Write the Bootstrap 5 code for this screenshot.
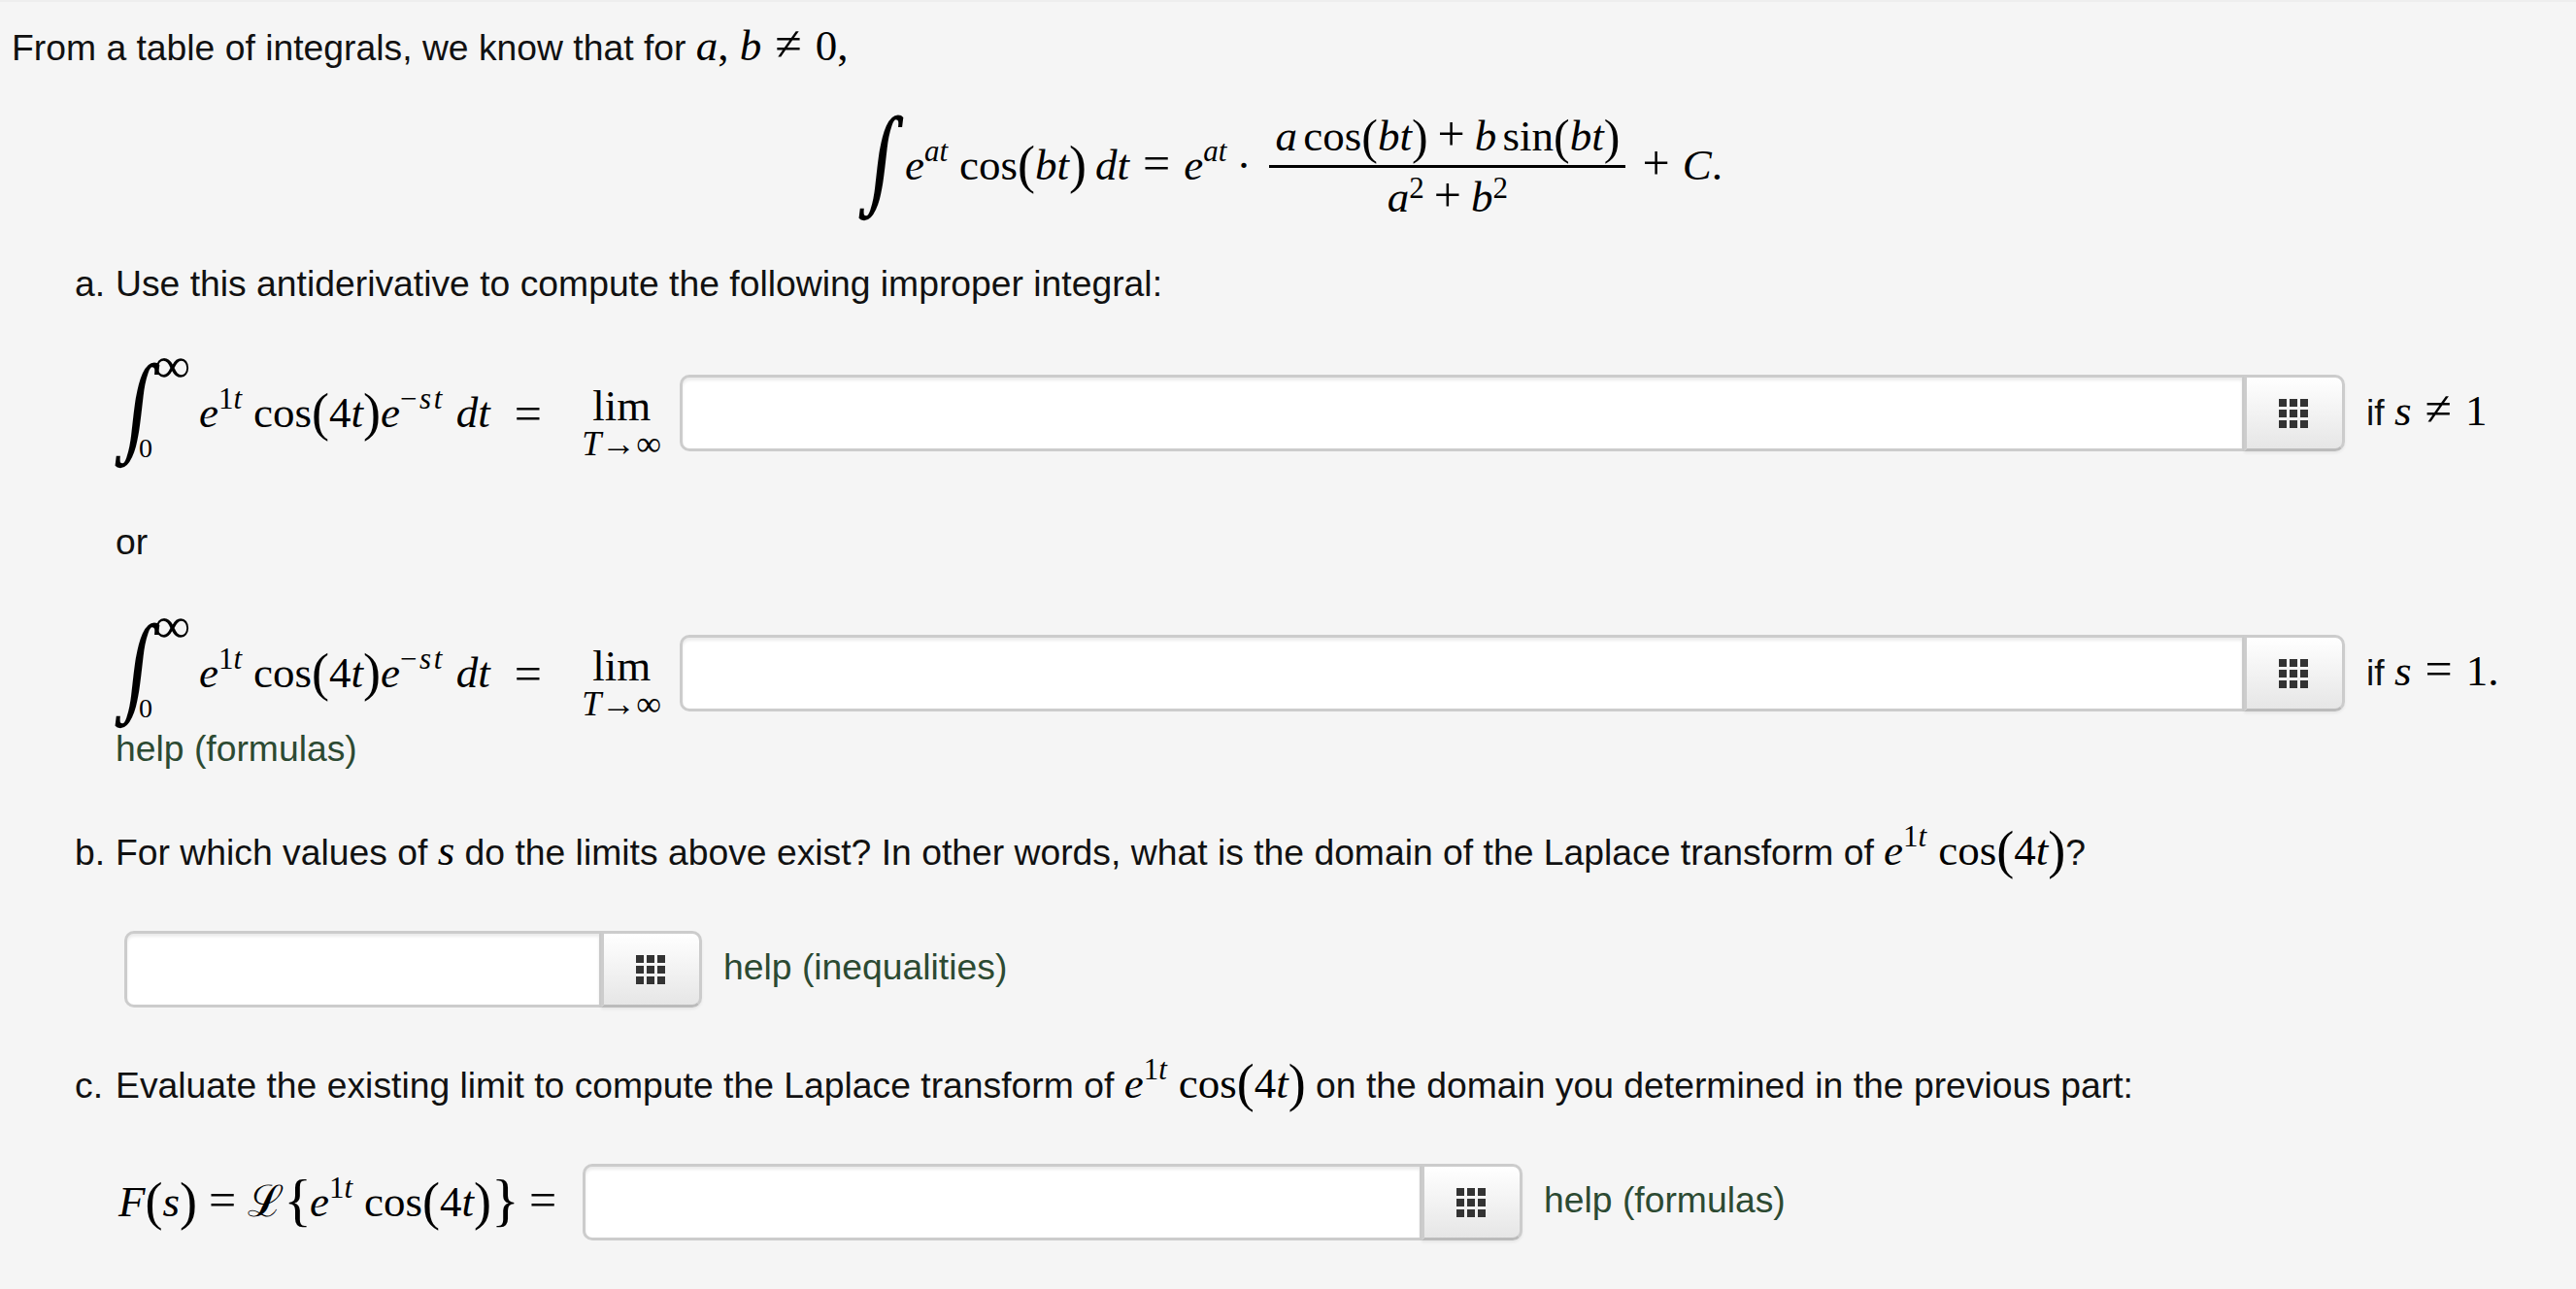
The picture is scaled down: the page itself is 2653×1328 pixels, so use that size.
<!DOCTYPE html>
<html lang="en"><head><meta charset="utf-8"><title>Laplace transform</title>
<link href="https://cdn.jsdelivr.net/npm/bootstrap@5.3.0/dist/css/bootstrap.min.css" rel="stylesheet">
<style>
html,body{height:100%}
body{background:#f5f5f5;border-top:2px solid #eee;font-family:"Liberation Sans",Arial,sans-serif;font-size:37.3px;color:#111;overflow:hidden}
.txt-line{height:44px;line-height:44px;white-space:nowrap}
.first-line{margin:23px 0 0 12px}
.part-line{margin-left:77px}
.part-mark{display:inline-block;width:42px}
.indent{margin-left:119px}
.mth{font-family:"Liberation Serif",serif;font-size:45px;white-space:nowrap;color:#000}
.mth i{font-style:italic}
.mth sup{font-size:31px;line-height:0;top:-.62em;vertical-align:baseline;position:relative;margin-right:3px}
.mth sup.sq{top:-.42em;margin-right:0}
.mth sup.wide-sup{letter-spacing:2.5px}
.op{margin:0 14px;font-size:50px;line-height:0}
.op-sm{margin:0 7px}
.op-f{margin:0 10px;font-size:50px;line-height:0}
.fn{margin-left:9px}
.disp{height:120px;margin-top:42px;padding-left:885px}
.frac{margin:0 17px 0 12px;width:367px}
.frac-top{border-bottom:3px solid #000;padding-bottom:4px;text-align:center;line-height:52px;word-spacing:-5px}
.frac-top .paren{font-size:50px}
.frac-bot{text-align:center;line-height:52px;padding-top:4px}
.plus-c{font-size:50px;line-height:0;margin-right:13px}
.int-sign{font-family:"DejaVu Math TeX Gyre","Liberation Serif",serif;font-size:76px;line-height:1;display:inline-block;transform:skewX(-7deg) scaleY(1.3);flex:none}
.int-d{width:47px}
.int-r{width:24px}
.limits{height:102px;line-height:30px;width:62px;flex:none;font-size:28px}
.lim-up{font-size:52px;margin:-13px 0 0 16px}
.eq-block{width:581px;height:79px}
.lim-col{margin-left:auto;margin-right:19px;text-align:center;padding-top:20px}
.lim-top{line-height:42px}
.lim-sub{font-size:36px;line-height:36px}
.eqs{margin-left:25px;font-size:50px;line-height:1}
.inp-wrap .form-control{height:79px;border:3px solid #ccc;border-radius:10px 0 0 10px;background:#fff;box-shadow:inset 0 3px 3px rgba(0,0,0,.08)}
.inp-wrap .btn{width:104px;height:79px;border:3px solid #ccc;border-bottom-color:#bbb;border-radius:0 10px 10px 0;background:linear-gradient(#fff,#e6e6e6);padding:0 2px 0 0;display:flex;align-items:center;justify-content:center;box-shadow:0 2px 3px rgba(0,0,0,.06)}
.inp-wrap svg{filter:blur(.4px)}
.w-long{width:1715px;flex:none}
.w-short{width:595px;flex:none}
.w-mid{width:968px;flex:none}
.after{margin-left:22px;margin-bottom:3px;white-space:nowrap}
.helper{color:#2c4a32}
.gap-a{margin-top:39px}.gap-r1{margin-top:72px}.gap-or{margin-top:71px}.gap-r2{margin-top:74px}.gap-h{margin-top:16px}.gap-b{margin-top:61px}.gap-r3{margin-top:61px}.gap-c{margin-top:56px}.gap-r4{margin-top:61px}
.short-row{margin-left:128px}
.f-block{width:481px;padding-left:3px}
.f-block .op{margin:0 12px}
.brace{font-size:60px;line-height:0;position:relative;top:3px;letter-spacing:-2px}
.paren{font-size:54px;line-height:0;position:relative;top:3px}
</style></head>
<body>
<div class="txt-line first-line">From a table of integrals, we know that for <span class="mth"><i>a</i>, <i>b</i><span class="op">≠</span>0,</span></div>

<div class="disp d-flex align-items-center mth">
  <span class="int-sign int-d">∫</span>
  <span><i>e</i><sup><i>at</i></sup><span class="fn">cos</span><span class="paren">(</span><i>bt</i><span class="paren">)</span><span class="fn"><i>dt</i></span><span class="op">=</span><i>e</i><sup><i>at</i></sup><span class="op-sm">·</span></span>
  <span class="frac d-flex flex-column"><span class="frac-top"><i>a</i> cos<span class="paren">(</span><i>bt</i><span class="paren">)</span><span class="op-f">+</span><i>b</i> sin<span class="paren">(</span><i>bt</i><span class="paren">)</span></span><span class="frac-bot"><i>a</i><sup class="sq">2</sup><span class="op-f">+</span><i>b</i><sup class="sq">2</sup></span></span>
  <span><span class="plus-c">+</span><i>C</i>.</span>
</div>

<div class="txt-line part-line gap-a"><span class="part-mark">a.</span>Use this antiderivative to compute the following improper integral:</div>

<div class="d-flex align-items-center indent gap-r1">
  <div class="eq-block d-flex align-items-center mth">
    <span class="int-sign int-r">∫</span><span class="limits d-flex flex-column justify-content-between"><span class="lim-up">∞</span><span>0</span></span>
    <span><i>e</i><sup>1<i>t</i></sup><span class="fn">cos</span><span class="paren">(</span>4<i>t</i><span class="paren">)</span><i>e</i><sup class="wide-sup">−<i>st</i></sup><span class="fn"><i>dt</i></span></span><span class="eqs">=</span>
    <span class="lim-col d-flex flex-column"><span class="lim-top">lim</span><span class="lim-sub"><i>T</i>→∞</span></span>
  </div>
  <div class="input-group inp-wrap w-long"><input class="form-control" type="text" aria-label="Answer"><button class="btn" type="button" aria-label="Equation editor"><svg width="32" height="32" viewBox="0 0 32 32"><g fill="#333"><rect x="1" y="1" width="8" height="8"/><rect x="12" y="1" width="8" height="8"/><rect x="23" y="1" width="8" height="8"/><rect x="1" y="12" width="8" height="8"/><rect x="12" y="12" width="8" height="8"/><rect x="23" y="12" width="8" height="8"/><rect x="1" y="23" width="8" height="8"/><rect x="12" y="23" width="8" height="8"/><rect x="23" y="23" width="8" height="8"/></g></svg></button></div>
  <div class="after">if <span class="mth"><i>s</i><span class="op">≠</span>1</span></div>
</div>

<div class="txt-line indent gap-or">or</div>

<div class="d-flex align-items-center indent gap-r2">
  <div class="eq-block d-flex align-items-center mth">
    <span class="int-sign int-r">∫</span><span class="limits d-flex flex-column justify-content-between"><span class="lim-up">∞</span><span>0</span></span>
    <span><i>e</i><sup>1<i>t</i></sup><span class="fn">cos</span><span class="paren">(</span>4<i>t</i><span class="paren">)</span><i>e</i><sup class="wide-sup">−<i>st</i></sup><span class="fn"><i>dt</i></span></span><span class="eqs">=</span>
    <span class="lim-col d-flex flex-column"><span class="lim-top">lim</span><span class="lim-sub"><i>T</i>→∞</span></span>
  </div>
  <div class="input-group inp-wrap w-long"><input class="form-control" type="text" aria-label="Answer"><button class="btn" type="button" aria-label="Equation editor"><svg width="32" height="32" viewBox="0 0 32 32"><g fill="#333"><rect x="1" y="1" width="8" height="8"/><rect x="12" y="1" width="8" height="8"/><rect x="23" y="1" width="8" height="8"/><rect x="1" y="12" width="8" height="8"/><rect x="12" y="12" width="8" height="8"/><rect x="23" y="12" width="8" height="8"/><rect x="1" y="23" width="8" height="8"/><rect x="12" y="23" width="8" height="8"/><rect x="23" y="23" width="8" height="8"/></g></svg></button></div>
  <div class="after">if <span class="mth"><i>s</i><span class="op">=</span>1.</span></div>
</div>

<div class="txt-line indent helper gap-h">help (formulas)</div>

<div class="txt-line part-line gap-b"><span class="part-mark">b.</span>For which values of <span class="mth"><i>s</i></span> do the limits above exist? In other words, what is the domain of the Laplace transform of <span class="mth"><i>e</i><sup>1<i>t</i></sup><span class="fn">cos</span><span class="paren">(</span>4<i>t</i><span class="paren">)</span></span>?</div>

<div class="d-flex align-items-center short-row gap-r3">
  <div class="input-group inp-wrap w-short"><input class="form-control" type="text" aria-label="Answer"><button class="btn" type="button" aria-label="Equation editor"><svg width="32" height="32" viewBox="0 0 32 32"><g fill="#333"><rect x="1" y="1" width="8" height="8"/><rect x="12" y="1" width="8" height="8"/><rect x="23" y="1" width="8" height="8"/><rect x="1" y="12" width="8" height="8"/><rect x="12" y="12" width="8" height="8"/><rect x="23" y="12" width="8" height="8"/><rect x="1" y="23" width="8" height="8"/><rect x="12" y="23" width="8" height="8"/><rect x="23" y="23" width="8" height="8"/></g></svg></button></div>
  <div class="after helper">help (inequalities)</div>
</div>

<div class="txt-line part-line gap-c"><span class="part-mark">c.</span>Evaluate the existing limit to compute the Laplace transform of <span class="mth"><i>e</i><sup>1<i>t</i></sup><span class="fn">cos</span><span class="paren">(</span>4<i>t</i><span class="paren">)</span></span> on the domain you determined in the previous part:</div>

<div class="d-flex align-items-center indent gap-r4">
  <div class="f-block mth"><i>F</i><span class="paren">(</span><i>s</i><span class="paren">)</span><span class="op">=</span>ℒ<span class="brace">{</span><i>e</i><sup>1<i>t</i></sup><span class="fn">cos</span><span class="paren">(</span>4<i>t</i><span class="paren">)</span><span class="brace">}</span><span class="op">=</span></div>
  <div class="input-group inp-wrap w-mid"><input class="form-control" type="text" aria-label="Answer"><button class="btn" type="button" aria-label="Equation editor"><svg width="32" height="32" viewBox="0 0 32 32"><g fill="#333"><rect x="1" y="1" width="8" height="8"/><rect x="12" y="1" width="8" height="8"/><rect x="23" y="1" width="8" height="8"/><rect x="1" y="12" width="8" height="8"/><rect x="12" y="12" width="8" height="8"/><rect x="23" y="12" width="8" height="8"/><rect x="1" y="23" width="8" height="8"/><rect x="12" y="23" width="8" height="8"/><rect x="23" y="23" width="8" height="8"/></g></svg></button></div>
  <div class="after helper">help (formulas)</div>
</div>
<script src="https://cdn.jsdelivr.net/npm/bootstrap@5.3.0/dist/js/bootstrap.bundle.min.js"></script>
</body></html>
